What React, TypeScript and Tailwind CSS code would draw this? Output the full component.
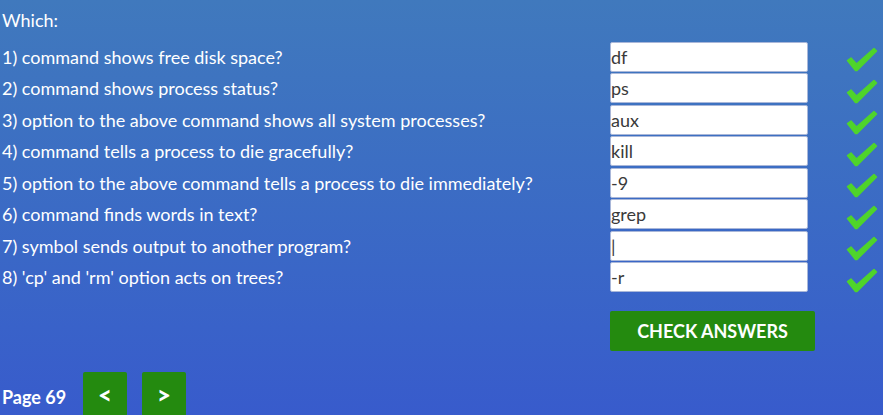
import React from "react";

const questions = [
  ["1) command shows free disk space?", "df"],
  ["2) command shows process status?", "ps"],
  ["3) option to the above command shows all system processes?", "aux"],
  ["4) command tells a process to die gracefully?", "kill"],
  ["5) option to the above command tells a process to die immediately?", "-9"],
  ["6) command finds words in text?", "grep"],
  ["7) symbol sends output to another program?", "|"],
  ["8) 'cp' and 'rm' option acts on trees?", "-r"],
];

function Check() {
  return (
    <svg width="33" height="25" viewBox="0 0 33 25" className="mt-[6px]">
      <path
        d="M2.5 13.5 L6 11 L11.5 17 L29 1.5 L31.5 4 L12 23.5 L10.5 23.5 Z"
        fill="#4fd42b"
        stroke="#4fd42b"
        strokeWidth="1.5"
        strokeLinejoin="round"
      />
    </svg>
  );
}

export default function App() {
  return (
    <div className="w-[883px] h-[415px] overflow-hidden bg-gradient-to-b from-[#4079bd] to-[#385bcc] font-['Lato',sans-serif] text-white text-[18px]">
      <div className="pl-[2px] pt-[9px]">
        <div className="h-[22px] leading-[22px]">Which:</div>
        <div className="mt-[10px] grid grid-cols-[608px_198px_1fr] auto-rows-[31.5px] items-center">
          {questions.map(([q, a]) => (
            <React.Fragment key={q}>
              <div className="leading-[22px]">{q}</div>
              <div className="h-[30px] bg-white border border-[#a9b7d9] rounded-[2px] text-[#3a3a3a] leading-[28px]">
                {a}
              </div>
              <div className="pl-[37px] flex items-center h-full">
                <Check />
              </div>
            </React.Fragment>
          ))}
        </div>
        <button className="mt-[18px] ml-[608px] w-[205px] h-[40px] bg-[#248a0f] rounded-[2px] text-white font-bold text-[18px] flex items-center justify-center">
          CHECK ANSWERS
        </button>
        <div className="mt-[21px] flex items-center">
          <div className="w-[81px] font-bold text-[18px] pt-[7px]">Page 69</div>
          <button className="w-[44px] h-[44px] bg-[#248a0f] rounded-[2px] font-black text-[24px] leading-none flex items-center justify-center pt-[2px]">
            &lt;
          </button>
          <button className="ml-[15px] w-[44px] h-[44px] bg-[#248a0f] rounded-[2px] font-black text-[24px] leading-none flex items-center justify-center pt-[2px]">
            &gt;
          </button>
        </div>
      </div>
    </div>
  );
}
